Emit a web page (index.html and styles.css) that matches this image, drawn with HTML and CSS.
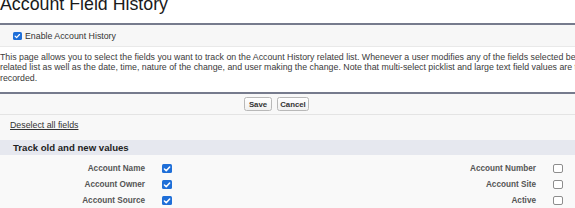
FILE: index.html
```html
<!DOCTYPE html>
<html>
<head>
<meta charset="utf-8">
<link rel="stylesheet" href="styles.css">
</head>
<body>
<div class="page">
  <h1 class="title">Account Field History</h1>
  <div class="enable">
    <span class="cb checked small"><svg viewBox="0 0 10 10"><path d="M2.3 5.2 L4.2 7 L7.8 3.2" fill="none" stroke="#fff" stroke-width="1.6" stroke-linecap="round" stroke-linejoin="round"/></svg></span>
    <span class="enable-label">Enable Account History</span>
  </div>
  <p class="desc">This page allows you to select the fields you want to track on the Account History related list. Whenever a user modifies any of the fields selected below, the old and new field values are added to the History<br>related list as well as the date, time, nature of the change, and user making the change. Note that multi-select picklist and large text field values are tracked as edited; their old and new values are not<br>recorded.</p>
  <div class="block">
    <div class="buttons">
      <button class="btn btn-save">Save</button>
      <button class="btn btn-cancel">Cancel</button>
    </div>
    <div class="deselect"><a class="link">Deselect all fields</a></div>
    <div class="subheader">Track old and new values</div>
    <div class="fields">
      <span class="lbl">Account Name</span>
      <span class="cb checked"><svg viewBox="0 0 10 10"><path d="M2.3 5.2 L4.2 7 L7.8 3.2" fill="none" stroke="#fff" stroke-width="1.6" stroke-linecap="round" stroke-linejoin="round"/></svg></span>
      <span class="lbl">Account Number</span>
      <span class="cb"></span>

      <span class="lbl">Account Owner</span>
      <span class="cb checked"><svg viewBox="0 0 10 10"><path d="M2.3 5.2 L4.2 7 L7.8 3.2" fill="none" stroke="#fff" stroke-width="1.6" stroke-linecap="round" stroke-linejoin="round"/></svg></span>
      <span class="lbl">Account Site</span>
      <span class="cb"></span>

      <span class="lbl">Account Source</span>
      <span class="cb checked"><svg viewBox="0 0 10 10"><path d="M2.3 5.2 L4.2 7 L7.8 3.2" fill="none" stroke="#fff" stroke-width="1.6" stroke-linecap="round" stroke-linejoin="round"/></svg></span>
      <span class="lbl">Active</span>
      <span class="cb"></span>
    </div>
  </div>
</div>
</body>
</html>
```
FILE: styles.css
```css
html, body {
  margin: 0;
  padding: 0;
  background: #fff;
  overflow: hidden;
}
body {
  font-family: Arial, "Liberation Sans", sans-serif;
  color: #333;
}
.page {
  width: 575px;
}
.title {
  margin: -4px 0 0;
  height: 27px;
  font-size: 17.8px;
  line-height: 17.7px;
  font-weight: normal;
  color: #1a1a1a;
  border-bottom: 2px solid #767b8d;
}
.enable {
  height: 21px;
  background: #f7f7f7;
  border-bottom: 1px solid #e9e9e9;
  display: flex;
  align-items: center;
  padding-left: 13px;
  gap: 3.5px;
}
.enable-label {
  font-size: 8.8px;
  color: #333;
}
.cb {
  display: inline-block;
  box-sizing: border-box;
  width: 10px;
  height: 9.5px;
  border: 1px solid #8d8d8d;
  border-radius: 2px;
  background: #fff;
}
.cb svg {
  display: block;
  width: 100%;
  height: 100%;
}
.cb.checked {
  border: none;
  background: #1f6fd8;
  border-radius: 1.5px;
}
.cb.small {
  width: 8.5px;
  height: 8px;
}
.desc {
  width: 1000px;
  margin: 4.5px 0 8.6px;
  font-size: 8.8px;
  line-height: 10.8px;
  color: #3a3a3a;
}
.block {
  border-top: 2px solid #767b8d;
  background: #f8f8f8;
}
.buttons {
  height: 19.3px;
  border-bottom: 1px solid #e4e4e4;
  display: flex;
  align-items: center;
  justify-content: center;
  gap: 5px;
  padding-right: 22px;
}
.btn {
  box-sizing: border-box;
  height: 14px;
  padding: 0;
  font-family: Arial, "Liberation Sans", sans-serif;
  font-size: 7.8px;
  font-weight: bold;
  color: #333;
  background: linear-gradient(#ffffff, #f0f0f0);
  border: 1px solid #b8b8b8;
  border-radius: 2.5px;
}
.btn-save { width: 28px; }
.btn-cancel { width: 32px; }
.deselect {
  box-sizing: border-box;
  height: 25px;
  padding: 5px 0 0 10px;
  font-size: 8.8px;
  line-height: 10.8px;
}
.link {
  color: #333;
  text-decoration: underline;
}
.subheader {
  height: 15px;
  line-height: 15px;
  padding-left: 13px;
  background: #e6e8ef;
  font-size: 9.6px;
  font-weight: bold;
  color: #222;
}
.fields {
  display: grid;
  grid-template-columns: 145px 10px 1fr 10px;
  column-gap: 17px;
  padding: 5.5px 12px 0 0;
  grid-auto-rows: 16px;
  align-items: center;
  background: #f9f9f9;
  height: 60px;
}
.lbl {
  text-align: right;
  font-size: 8.2px;
  font-weight: bold;
  color: #555;
}
```
